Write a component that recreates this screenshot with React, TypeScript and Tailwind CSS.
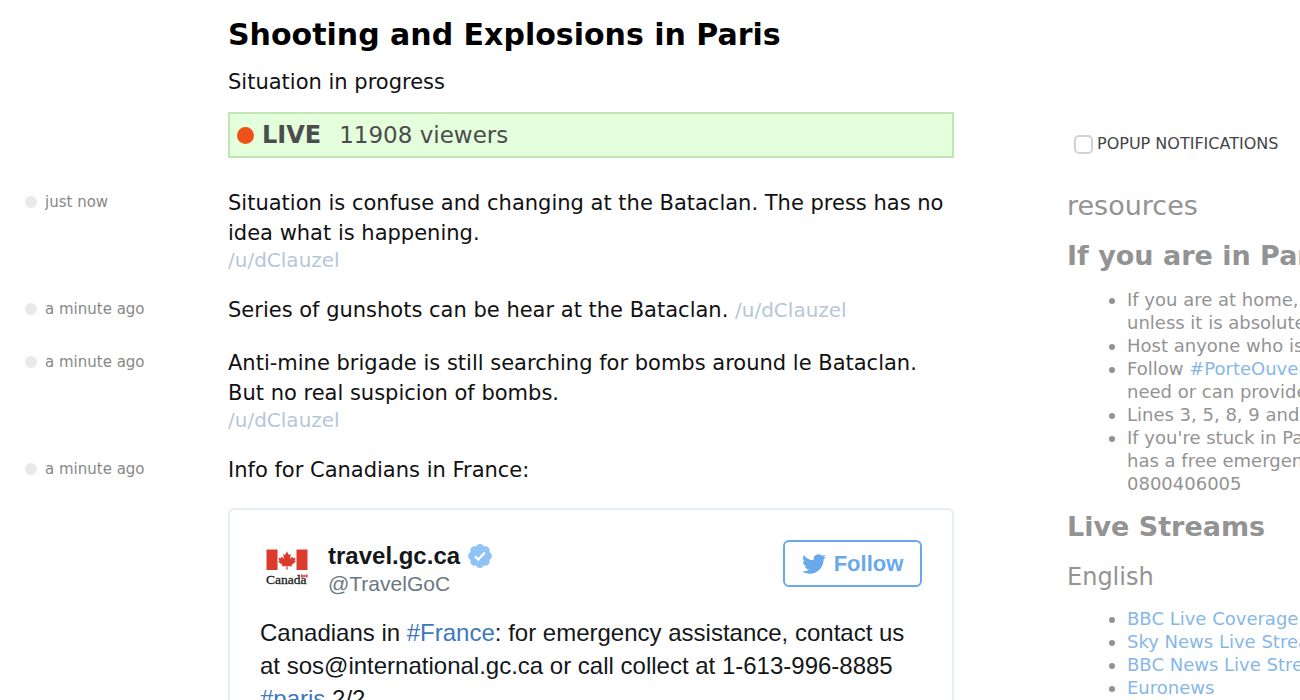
import type { ReactNode } from "react";

const verdana = "font-['Verdana','DejaVu_Sans',sans-serif]";
const helvetica = "font-['Liberation_Sans',Arial,sans-serif]";

function Update({ time, children }: { time: string; children: ReactNode }) {
  return (
    <li className="flex">
      <div className="flex h-7 w-[203px] shrink-0 items-center gap-2 text-[15px] text-[#888888]">
        <span className="size-3 rounded-full bg-[#e9e9e9]" />
        <time>{time}</time>
      </div>
      <div className="min-w-0 flex-1 text-[21px] leading-[30px] text-[#111111]">{children}</div>
    </li>
  );
}

function Author({ block = false }: { block?: boolean }) {
  return (
    <a href="#author" className={`${block ? "block leading-6" : ""} text-[20px] text-[#b8c6da]`}>
      /u/dClauzel
    </a>
  );
}

function CanadaLogo() {
  return (
    <svg viewBox="0 0 50 50" className="size-[50px] shrink-0" role="img" aria-label="Canada">
      <path fill="#dc3a2c" d="M6.500 9.500h11v20.500h-11zM36.500 9.500h11v20.500h-11z" />
      <path
        fill="#dc3a2c"
        d="M27 11.500l-1.900 3.400-2-.9 1 5.100-2.500-2.600-.6 1.700-2.600-.4 1 3-1.300.7 4.400 3.500-.5 1.600 4.500-.7-.2 3.600h1.400l-.2-3.600 4.500.7-.5-1.600 4.400-3.500-1.300-.7 1-3-2.600.4-.6-1.700-2.500 2.600 1-5.100-2 .9z"
      />
      <text x="6" y="44" fontSize="13.500" stroke="#222222" strokeWidth="0.300" className="fill-[#222222] font-['Liberation_Serif',serif]">
        Canada
      </text>
      <path fill="#dc3a2c" d="M41 34.500h1.800v3H41zM45.700 34.500h1.800v3h-1.800zM43.300 35h1.900v2h-1.900z" />
    </svg>
  );
}

function Verified() {
  return (
    <svg viewBox="0 0 24 24" className="size-6" role="img" aria-label="Verified account">
      <g fill="#8fc3f5">
        <circle cx="12" cy="12" r="9.800" />
        <circle cx="12" cy="4.300" r="4.200" />
        <circle cx="17.500" cy="6.500" r="4.200" />
        <circle cx="19.700" cy="12" r="4.200" />
        <circle cx="17.500" cy="17.500" r="4.200" />
        <circle cx="12" cy="19.700" r="4.200" />
        <circle cx="6.500" cy="17.500" r="4.200" />
        <circle cx="4.300" cy="12" r="4.200" />
        <circle cx="6.500" cy="6.500" r="4.200" />
      </g>
      <path d="M7 12.300l3.300 3.200 6.500-7" fill="none" stroke="white" strokeWidth="2.300" />
    </svg>
  );
}

function Bird() {
  return (
    <svg viewBox="0 0 24 24" className="size-6" fill="#68a9ec" aria-hidden="true">
      <path d="M23.953 4.570a10 10 0 01-2.825.775 4.958 4.958 0 002.163-2.723c-.951.555-2.005.959-3.127 1.184a4.920 4.920 0 00-8.384 4.482C7.690 8.095 4.067 6.130 1.640 3.162a4.822 4.822 0 00-.666 2.475c0 1.710.870 3.213 2.188 4.096a4.904 4.904 0 01-2.228-.616v.060a4.923 4.923 0 003.946 4.827 4.996 4.996 0 01-2.212.085 4.936 4.936 0 004.604 3.417 9.867 9.867 0 01-6.102 2.105c-.390 0-.779-.023-1.170-.067a13.995 13.995 0 007.557 2.209c9.053 0 13.998-7.496 13.998-13.985 0-.210 0-.420-.015-.630A9.935 9.935 0 0024 4.590z" />
    </svg>
  );
}

function Tweet() {
  return (
    <article className={`mt-[23px] rounded-md border-2 border-[#e8edf1] p-[30px] ${helvetica}`}>
      <header className="flex items-start justify-between">
        <div className="flex items-start gap-[18px]">
          <CanadaLogo />
          <div className="flex flex-col pt-0.5">
            <div className="flex h-7 items-center gap-2">
              <a href="#account" className="text-[24px] leading-7 font-bold text-[#14171a]">travel.gc.ca</a>
              <Verified />
            </div>
            <span className="text-[21px] leading-7 text-[#697882]">@TravelGoC</span>
          </div>
        </div>
        <button type="button" className="flex h-[47px] w-[139px] items-center justify-center gap-2 rounded-md border-2 border-[#68a9ec] text-[22px] font-bold text-[#68a9ec]">
          <Bird />
          Follow
        </button>
      </header>
      <p className="mt-[18px] text-[24px] leading-[33px] whitespace-nowrap text-[#14171a]">
        Canadians in <a href="#france" className="text-[#3b78bd]">#France</a>: for emergency assistance, contact us
        <br />
        at sos@international.gc.ca or call collect at 1-613-996-8885
        <br />
        <a href="#paris" className="text-[#3b78bd]">#paris</a> 2/2
      </p>
    </article>
  );
}

const bullets = "list-disc pl-[60px] text-[18px] leading-[23px]";

function Sidebar() {
  return (
    <aside className="w-[233px] shrink-0 overflow-hidden pt-[132px] whitespace-nowrap text-[#939393]">
      <label className="ml-[7px] flex h-6 items-center gap-1 text-[16px] text-[#444444]">
        <input type="checkbox" className="size-[19px] shrink-0 appearance-none rounded-[5px] border-2 border-[#d2d2d2] bg-white" />
        POPUP NOTIFICATIONS
      </label>
      <h2 className="mt-8 text-[27px] leading-9">resources</h2>
      <h3 className="mt-3.5 text-[27px] leading-9 font-bold">If you are in Paris</h3>
      <ul className={`mt-3.5 ${bullets}`}>
        <li>If you are at home, stay there<br />unless it is absolutely necessary</li>
        <li>Host anyone who is in need</li>
        <li>Follow <a href="#porteouverte" className="text-[#85b8e8]">#PorteOuverte</a> if you are in<br />need or can provide shelter</li>
        <li>Lines 3, 5, 8, 9 and 11 are closed</li>
        <li>If you're stuck in Paris, the city<br />has a free emergency number:<br />0800406005</li>
      </ul>
      <h3 className="mt-3.5 text-[27px] leading-9 font-bold">Live Streams</h3>
      <h4 className="mt-3.5 text-[24px] leading-9">English</h4>
      <ul className={`mt-3 ${bullets}`}>
        <li><a href="#bbc-live" className="text-[#85b8e8]">BBC Live Coverage</a></li>
        <li><a href="#sky" className="text-[#85b8e8]">Sky News Live Stream</a></li>
        <li><a href="#bbc-news" className="text-[#85b8e8]">BBC News Live Stream</a></li>
        <li><a href="#euronews" className="text-[#85b8e8]">Euronews</a></li>
      </ul>
    </aside>
  );
}

export default function App() {
  return (
    <div className={`flex h-screen gap-[113px] overflow-hidden bg-white pl-[25px] ${verdana}`}>
      <main className="min-w-0 flex-1 pt-[15px]">
        <header className="ml-[203px]">
          <h1 className="text-[30px] leading-10 font-bold whitespace-nowrap text-black">Shooting and Explosions in Paris</h1>
          <p className="mt-3 text-[21px] leading-[30px] text-[#111111]">Situation in progress</p>
          <div className="mt-[15px] flex h-[46px] items-center border-2 border-[#c0e6b4] bg-[#e4ffdc] px-[7px] text-[23px] text-[#4c4c4c]">
            <span className="size-[17px] rounded-full bg-[#f05118]" />
            <strong className="ml-2 text-[24px]">LIVE</strong>
            <span className="ml-[18px]">11908 viewers</span>
          </div>
        </header>
        <ol className="mt-[30px] flex flex-col gap-[23px] whitespace-nowrap">
          <Update time="just now">
            Situation is confuse and changing at the Bataclan. The press has no
            <br />
            idea what is happening.
            <Author block />
          </Update>
          <Update time="a minute ago">
            Series of gunshots can be hear at the Bataclan. <Author />
          </Update>
          <Update time="a minute ago">
            Anti-mine brigade is still searching for bombs around le Bataclan.
            <br />
            But no real suspicion of bombs.
            <Author block />
          </Update>
          <Update time="a minute ago">
            Info for Canadians in France:
            <Tweet />
          </Update>
        </ol>
      </main>
      <Sidebar />
    </div>
  );
}
